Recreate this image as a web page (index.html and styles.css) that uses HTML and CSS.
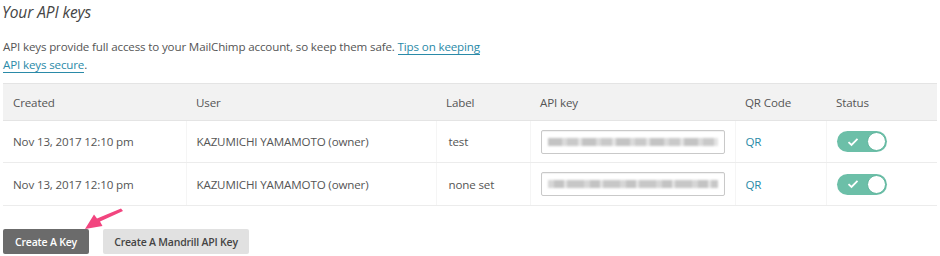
FILE: index.html
```html
<!DOCTYPE html>
<html lang="en">
<head>
    <meta charset="UTF-8">
    <title>Your API keys</title>
    <link rel="stylesheet" href="styles.css">
</head>
<body>
    <div class="page">
        <h2 class="title">Your API keys</h2>
        <p class="intro">
            API keys provide full access to your MailChimp account, so keep them safe. <a href="#">Tips on keeping<br>API keys secure</a>.
        </p>

        <table class="keys">
            <thead>
                <tr>
                    <th class="col-created">Created</th>
                    <th class="col-user">User</th>
                    <th class="col-label">Label</th>
                    <th class="col-key">API key</th>
                    <th class="col-qr">QR Code</th>
                    <th class="col-status">Status</th>
                </tr>
            </thead>
            <tbody>
                <tr>
                    <td>Nov 13, 2017 12:10 pm</td>
                    <td>KAZUMICHI YAMAMOTO (owner)</td>
                    <td class="label-cell">test</td>
                    <td><div class="key-field"><div class="key-blur"></div></div></td>
                    <td><a href="#" class="qr">QR</a></td>
                    <td>
                        <span class="toggle">
                            <svg class="check" width="12" height="10" viewBox="0 0 12 10"><path d="M1.5 5.2 L4.5 8 L10.5 1.8" fill="none" stroke="#fff" stroke-width="1.8"/></svg>
                            <span class="knob"></span>
                        </span>
                    </td>
                </tr>
                <tr>
                    <td>Nov 13, 2017 12:10 pm</td>
                    <td>KAZUMICHI YAMAMOTO (owner)</td>
                    <td class="label-cell">none set</td>
                    <td><div class="key-field"><div class="key-blur alt"></div></div></td>
                    <td><a href="#" class="qr">QR</a></td>
                    <td>
                        <span class="toggle">
                            <svg class="check" width="12" height="10" viewBox="0 0 12 10"><path d="M1.5 5.2 L4.5 8 L10.5 1.8" fill="none" stroke="#fff" stroke-width="1.8"/></svg>
                            <span class="knob"></span>
                        </span>
                    </td>
                </tr>
            </tbody>
        </table>

        <div class="actions">
            <button class="btn btn-dark">Create A Key</button>
            <button class="btn btn-light">Create A Mandrill API Key</button>
        </div>

        <!-- annotation arrow -->
        <svg class="arrow" width="50" height="30" viewBox="0 0 50 30">
            <path d="M41 1.5 L43 4 L20 14.5 L22.5 19 L5 22 L14 7.5 L17 11.5 Z" fill="#f2457f"/>
        </svg>
    </div>
</body>
</html>
```

FILE: styles.css
```css
* {
    margin: 0;
    padding: 0;
    box-sizing: border-box;
}

body {
    font-family: 'Open Sans', 'Liberation Sans', sans-serif;
    font-size: 11.6px;
    letter-spacing: -0.15px;
    color: #555;
    background: #fff;
}

.page {
    position: relative;
    padding: 0 3px;
}

.title {
    font-size: 15.5px;
    font-weight: normal;
    font-style: italic;
    color: #444;
    line-height: 24px;
    letter-spacing: -0.1px;
    margin-left: -1px;
}

.intro {
    margin-top: 14px;
    line-height: 18px;
    color: #555;
}

.intro a {
    color: #2a8aa8;
    text-decoration: none;
    border-bottom: 1px solid #2a8aa8;
}

/* Keys table */
.keys {
    width: 934px;
    margin-top: 9px;
    border-collapse: collapse;
}

.keys th {
    background: #f2f2f2;
    border-top: 1px solid #e4e4e4;
    border-bottom: 1px solid #e4e4e4;
    font-weight: normal;
    text-align: left;
    height: 37px;
    padding: 0 10px;
    color: #555;
}

.keys td {
    height: 42px;
    padding: 0 10px;
    border-bottom: 1px solid #ececec;
    border-left: 1px solid #f5f5f5;
}

.keys td:first-child {
    border-left: none;
}

.keys tbody tr:last-child td {
    height: 43px;
}

.col-created { width: 183px; }
.col-user { width: 250px; }
.col-label { width: 94px; }
.col-key { width: 205px; }
.col-qr { width: 91px; }

.label-cell {
    padding-left: 12px !important;
}

.key-field {
    width: 184px;
    height: 24px;
    border: 1px solid #c9c9c9;
    border-radius: 2px;
    box-shadow: inset 0 1px 1px rgba(0, 0, 0, 0.06);
    padding: 7px 6px;
}

.key-blur {
    height: 8px;
    background: repeating-linear-gradient(90deg, #bdbdbd 0 14px, #d6d6d6 14px 19px, #c4c4c4 19px 30px, #e0e0e0 30px 34px);
    filter: blur(1.2px);
    opacity: 0.9;
}

.key-blur.alt {
    background: repeating-linear-gradient(90deg, #d2d2d2 0 6px, #bdbdbd 6px 16px, #e2e2e2 16px 19px, #c2c2c2 19px 36px);
}

.qr {
    color: #2a8aa8;
    text-decoration: none;
}

/* Status toggle */
.toggle {
    display: inline-flex;
    align-items: center;
    justify-content: space-between;
    width: 50px;
    height: 21px;
    padding: 0 1px 0 10px;
    border-radius: 11px;
    background: #6cbfa8;
    vertical-align: middle;
}

.knob {
    width: 19px;
    height: 19px;
    border-radius: 50%;
    background: #fff;
    border: 1px solid #5fb59d;
}

/* Buttons */
.actions {
    display: flex;
    gap: 14px;
    margin-top: 23px;
}

.btn {
    font-family: inherit;
    font-size: 10.5px;
    font-weight: 600;
    letter-spacing: -0.2px;
    height: 25px;
    border: none;
    border-radius: 2px;
    cursor: pointer;
}

.btn-dark {
    width: 86px;
    background: #6b6b6b;
    color: #fff;
}

.btn-light {
    width: 146px;
    background: #e1e1e1;
    color: #444;
}

.arrow {
    position: absolute;
    left: 80px;
    top: 207px;
}
```
